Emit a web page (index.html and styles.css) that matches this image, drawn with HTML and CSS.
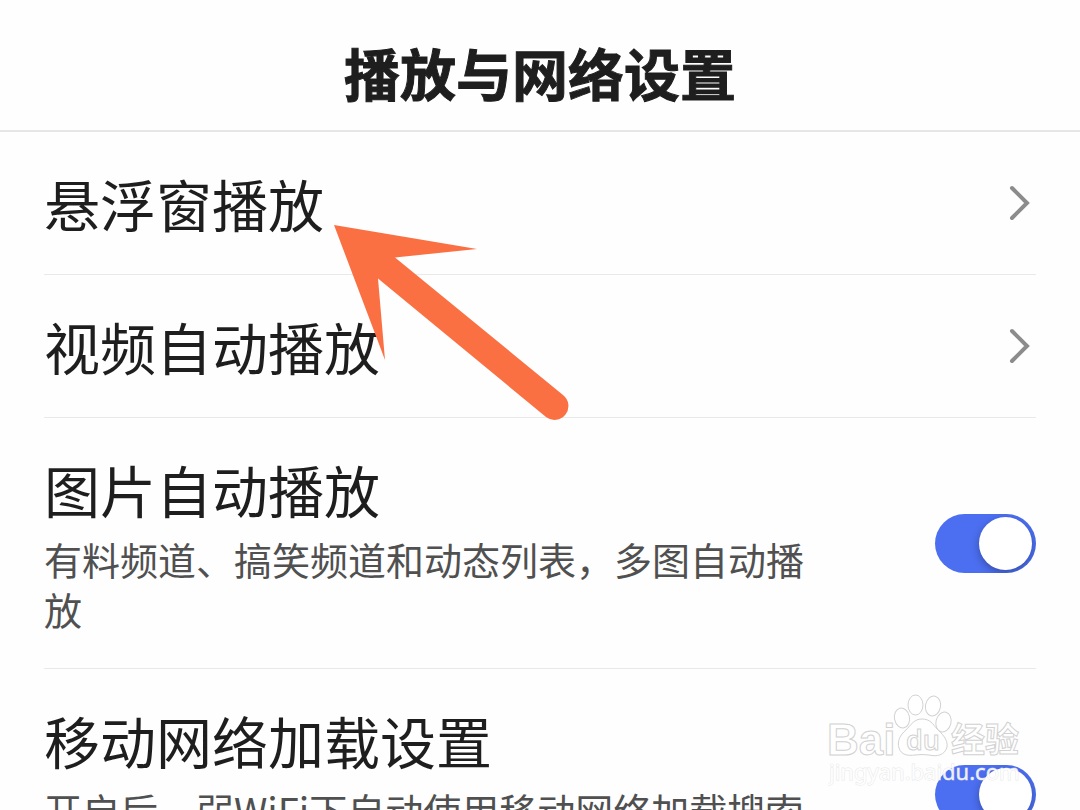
FILE: index.html
```html
<!DOCTYPE html>
<html lang="zh-CN">
<head>
<meta charset="utf-8">
<meta name="viewport" content="width=device-width, initial-scale=1">
<title>播放与网络设置</title>
<link rel="stylesheet" href="styles.css">
</head>
<body>
<header class="header">
  <h1 class="header-title">播放与网络设置</h1>
</header>
<main class="settings">
  <button type="button" class="row">
    <span class="row-title">悬浮窗播放</span>
    <svg class="chevron" viewBox="0 0 24 36" aria-hidden="true"><path d="M4 3 L19 18 L4 33"/></svg>
  </button>
  <button type="button" class="row">
    <span class="row-title">视频自动播放</span>
    <svg class="chevron" viewBox="0 0 24 36" aria-hidden="true"><path d="M4 3 L19 18 L4 33"/></svg>
  </button>
  <div class="row">
    <div class="row-text">
      <label class="row-title" for="auto-images">图片自动播放</label>
      <p class="row-desc">有料频道、搞笑频道和动态列表，多图自动播放</p>
    </div>
    <input class="switch" type="checkbox" role="switch" id="auto-images" checked>
  </div>
  <div class="row">
    <div class="row-text">
      <label class="row-title" for="mobile-data">移动网络加载设置</label>
      <p class="row-desc">开启后，弱WiFi下自动使用移动网络加载搜索</p>
    </div>
    <input class="switch" type="checkbox" role="switch" id="mobile-data" checked>
  </div>
</main>
<svg class="arrow" viewBox="0 0 240 200" aria-hidden="true">
  <path d="M1 1 L144 25 L62 33.500 L230 171 A13.500 13.500 0 0 1 213 193 L45 54.500 L52 136 Z"/>
</svg>
<svg class="watermark" viewBox="0 0 200 100" role="img" aria-label="Baidu 经验">
  <g class="mark">
    <text class="mark-brand" x="-1" y="64">Bai</text>
    <ellipse cx="74" cy="27" rx="7.500" ry="10" transform="rotate(-12 74 27)"/>
    <ellipse cx="87.500" cy="14" rx="7.500" ry="10"/>
    <ellipse cx="105" cy="15" rx="7.500" ry="10" transform="rotate(12 105 15)"/>
    <ellipse cx="115.500" cy="31" rx="7.500" ry="10" transform="rotate(14 115.500 31)"/>
    <path d="M94 28 C86 28 83 34 78 39 C72 44 69 50 71 57 C73 64 80 65 87 64 Q94 63 101 64 C109 66 117 64 119 56 C120 48 114 43 109 38 C105 33 102 28 94 28Z"/>
    <text class="mark-du" x="78" y="59">du</text>
    <text class="mark-cn" x="123" y="61">经验</text>
  </g>
  <text class="mark-url" x="1" y="89">jingyan.baidu.com</text>
</svg>
</body>
</html>
```
FILE: styles.css
```css
* {
  box-sizing: border-box;
}

body {
  position: relative;
  height: 100vh;
  margin: 0;
  overflow: hidden;
  background: #fefefe;
  color: #1e1e1e;
  font-family: "Noto Sans CJK SC", sans-serif;
}

.header {
  padding: 32px 44px 18px;
  border-bottom: 2px solid #e6e6e6;
  text-align: center;
}

.header-title {
  margin: 0;
  font-size: 56px;
  font-weight: 700;
  line-height: 80px;
  -webkit-text-stroke: 1px #1e1e1e;
}

.settings {
  padding: 0 44px;
}

.row {
  display: flex;
  align-items: center;
  justify-content: space-between;
  width: 100%;
  padding: 32px 0;
  border: 0;
  border-bottom: 1px solid #e9e9e9;
  background: none;
  color: inherit;
  font: inherit;
  text-align: left;
}

.row-text {
  flex: 1;
  max-width: 780px;
}

.row-title {
  display: block;
  font-size: 56px;
  line-height: 78px;
}

.row-desc {
  min-height: 102px;
  margin: 6px 0 0;
  color: #505050;
  font-size: 38px;
  line-height: 50px;
}

.chevron {
  width: 24px;
  height: 36px;
  margin-right: 4px;
  fill: none;
  stroke: #8c8c8c;
  stroke-width: 4;
  stroke-linecap: round;
}

.switch {
  appearance: none;
  flex: none;
  display: flex;
  align-items: center;
  width: 101px;
  height: 59px;
  margin: 0;
  padding: 0 4px;
  overflow: hidden;
  border-radius: 30px;
  background: #c8c8c8;
}

.switch::before {
  content: "";
  width: 53px;
  height: 53px;
  border-radius: 50%;
  background: #fff;
  box-shadow: 0 3px 8px rgba(0, 0, 0, 0.3);
}

.switch:checked {
  justify-content: flex-end;
  background: #4c6ff1;
}

.arrow {
  position: absolute;
  top: 224px;
  left: 333px;
  width: 240px;
  height: 200px;
  fill: #fb7043;
  pointer-events: none;
}

.watermark {
  position: absolute;
  right: 52px;
  bottom: 19px;
  width: 200px;
  height: 100px;
  pointer-events: none;
}

.mark {
  fill: #fff;
  stroke: #d2d2d2;
  stroke-width: 1;
}

.mark-brand {
  font: 700 44px "Liberation Sans", sans-serif;
}

.mark-du {
  font: 600 27px "Open Sans", sans-serif;
}

.mark-cn {
  font: 700 34px "Noto Sans CJK SC", sans-serif;
}

.mark-url {
  fill: #fff;
  fill-opacity: 0.9;
  stroke: #d8d8d8;
  stroke-opacity: 0.6;
  stroke-width: 1;
  paint-order: stroke;
  font: 400 22px "Noto Sans", sans-serif;
}
```
